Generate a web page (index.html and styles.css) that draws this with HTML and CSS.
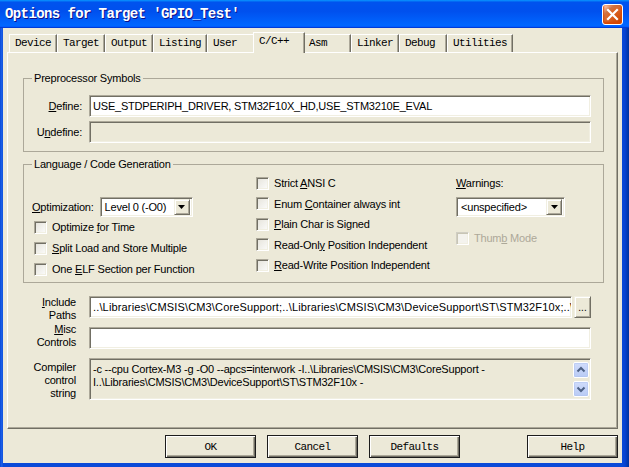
FILE: index.html
```html
<!DOCTYPE html>
<html>
<head>
<meta charset="utf-8">
<title>Options for Target</title>
<link rel="stylesheet" href="styles.css">
</head>
<body>
<div class="window">
  <div class="titlebar">
    <span class="title">Options for Target 'GPIO_Test'</span>
    <span class="close"><svg width="13" height="13" viewBox="0 0 13 13"><path d="M2 2 L11 11 M11 2 L2 11" stroke="#fff" stroke-width="2.2" stroke-linecap="square"/></svg></span>
  </div>
  <div class="client">
    <div class="tabs">
      <span class="tab">Device</span>
      <span class="tab">Target</span>
      <span class="tab">Output</span>
      <span class="tab">Listing</span>
      <span class="tab">User</span>
      <span class="tab active">C/C++</span>
      <span class="tab">Asm</span>
      <span class="tab">Linker</span>
      <span class="tab">Debug</span>
      <span class="tab">Utilities</span>
    </div>
    <div class="panel">
      <fieldset class="group pre">
        <legend>Preprocessor Symbols</legend>
        <div class="pre-grid">
          <label class="rlabel"><u>D</u>efine:</label>
          <div class="field text">USE_STDPERIPH_DRIVER, STM32F10X_HD,USE_STM3210E_EVAL</div>
          <label class="rlabel">U<u>n</u>define:</label>
          <div class="field disabled"></div>
        </div>
      </fieldset>

      <fieldset class="group lang">
        <legend>Language / Code Generation</legend>
        <div class="lang-grid">
          <div class="col col1">
            <div class="opt-row">
              <span><u>O</u>ptimization:</span>
              <div class="combo opt"><span class="combo-text">Level 0 (-O0)</span><span class="drop"><svg width="7" height="4" viewBox="0 0 7 4"><path d="M0 0H7L3.5 4Z" fill="#000"/></svg></span></div>
            </div>
            <div class="check r21"><span class="box"></span><span>Optimize <u>f</u>or Time</span></div>
            <div class="check r21"><span class="box"></span><span><u>S</u>plit Load and Store Multiple</span></div>
            <div class="check r21"><span class="box"></span><span>One <u>E</u>LF Section per Function</span></div>
          </div>
          <div class="col col2">
            <div class="check r20"><span class="box"></span><span>Strict <u>A</u>NSI C</span></div>
            <div class="check r20"><span class="box"></span><span>Enum <u>C</u>ontainer always int</span></div>
            <div class="check r20"><span class="box"></span><span><u>P</u>lain Char is Signed</span></div>
            <div class="check r20"><span class="box"></span><span>Read-Onl<u>y</u> Position Independent</span></div>
            <div class="check r20"><span class="box"></span><span><u>R</u>ead-Write Position Independent</span></div>
          </div>
          <div class="col col3">
            <div class="warn-label"><u>W</u>arnings:</div>
            <div class="combo warn"><span class="combo-text">&lt;unspecified&gt;</span><span class="drop"><svg width="7" height="4" viewBox="0 0 7 4"><path d="M0 0H7L3.5 4Z" fill="#000"/></svg></span></div>
            <div class="check thumb disabled-check"><span class="box"></span><span>Thum<u>b</u> Mode</span></div>
          </div>
        </div>
      </fieldset>

      <div class="misc-grid">
        <label class="mlabel inc"><u>I</u>nclude<br>Paths</label>
        <div class="inc-row">
          <div class="field text clip">..\Libraries\CMSIS\CM3\CoreSupport;..\Libraries\CMSIS\CM3\DeviceSupport\ST\STM32F10x;..\Libraries\STM32F10x_StdPeriph_Driver\inc</div>
          <span class="dots">...</span>
        </div>
        <label class="mlabel misc"><u>M</u>isc<br>Controls</label>
        <div class="field text"></div>
        <label class="mlabel comp">Compiler<br>control<br>string</label>
        <div class="field area">
          <div class="area-text">-c --cpu Cortex-M3 -g -O0 --apcs=interwork -I..\Libraries\CMSIS\CM3\CoreSupport -<br>I..\Libraries\CMSIS\CM3\DeviceSupport\ST\STM32F10x -</div>
          <div class="scrollbar">
            <span class="sbtn"><svg width="16" height="16" viewBox="0 0 16 16"><path d="M4.5 9.5 L8 6 L11.5 9.5" stroke="#4d6185" stroke-width="2" fill="none"/></svg></span>
            <span class="sbtn"><svg width="16" height="16" viewBox="0 0 16 16"><path d="M4.5 6.5 L8 10 L11.5 6.5" stroke="#4d6185" stroke-width="2" fill="none"/></svg></span>
          </div>
        </div>
      </div>
    </div>
    <div class="buttons">
      <button class="btn">OK</button>
      <button class="btn">Cancel</button>
      <button class="btn">Defaults</button>
      <button class="btn help">Help</button>
    </div>
  </div>
</div>
</body>
</html>
```
FILE: styles.css
```css
* { box-sizing: border-box; }
html, body { margin: 0; padding: 0; }
body {
  width: 629px;
  height: 467px;
  overflow: hidden;
  background: #0a4de0;
  font-family: "Liberation Sans", Arial, sans-serif;
  font-size: 11px;
  letter-spacing: -0.2px;
  color: #000;
}
u { text-decoration: underline; text-underline-offset: 1px; }

.window {
  width: 629px;
  height: 467px;
  display: flex;
  flex-direction: column;
  background: linear-gradient(90deg, #0a4ad8 0, #1f63ea 2px, #0a4ad8 3px, #0a4ad8 622px, #0843d2 625px, #00339c 629px);
}

.titlebar {
  height: 28px;
  flex: none;
  display: flex;
  align-items: center;
  justify-content: space-between;
  padding: 0 6px 0 5px;
  background: linear-gradient(180deg, #0997ff, #0053ee 8%, #0050ee 40%, #06f 88%, #06f 93%, #005bff 95%, #003dd7 96%, #003dd7);
}
.title {
  color: #fff;
  font: bold 14px "Liberation Mono", monospace;
  letter-spacing: -0.6px;
  text-shadow: 1px 1px #0f1089;
  white-space: pre;
}
.close {
  width: 21px;
  height: 21px;
  border: 1px solid #fff;
  border-radius: 3px;
  background: radial-gradient(circle at 90% 90%, #cc4600 0, #dc6527 55%, #cd7546 70%, #ffccb2 90%, #fff 100%);
  box-shadow: inset 0 -1px 2px 1px #da4600;
  display: flex;
  align-items: center;
  justify-content: center;
}

.client {
  flex: 1;
  min-width: 0;
  margin: 0 7px 4px 3px;
  background: #ece9d8;
  display: flex;
  flex-direction: column;
  padding-top: 6px;
}

.tabs {
  display: flex;
  height: 18px;
  padding-left: 6px;
  position: relative;
  z-index: 1;
  flex: none;
}
.tab {
  min-width: 48px;
  height: 18px;
  padding: 0 5px;
  font: 11px "Liberation Mono", monospace;
  letter-spacing: -0.6px;
  line-height: 17px;
  border-top: 1px solid #fff;
  border-left: 1px solid #fff;
  border-right: 1px solid #716f64;
  box-shadow: inset -1px 0 #aca899;
  white-space: nowrap;
  background: #ece9d8;
}
.tab.active {
  min-width: 52px;
  height: 21px;
  margin: -2px -2px 0;
  line-height: 16px;
  position: relative;
  z-index: 2;
}

.panel {
  flex: 1;
  min-width: 0;
  margin: 0 4px;
  border: 1px solid;
  border-color: #fff #716f64 #716f64 #fff;
  box-shadow: inset -1px -1px #aca899;
  padding: 19px 13px 0 15px;
  display: flex;
  flex-direction: column;
}

.group {
  margin: 0;
  border: 1px solid #aca899;
  min-width: 0;
}
.group legend {
  padding: 0 2px;
  margin: 0;
  line-height: 13px;
}
.pre { padding: 10px 12px 8px 8px; }
.lang { padding: 2px 12px 2px 8px; margin-top: 6px; }

.pre-grid {
  display: grid;
  grid-template-columns: 50px minmax(0, 1fr);
  column-gap: 7px;
  row-gap: 4px;
  grid-auto-rows: 22px;
  align-items: center;
}
.rlabel { text-align: right; white-space: nowrap; }

.field {
  height: 22px;
  min-width: 0;
  border: 1px solid;
  border-color: #aca899 #fff #fff #aca899;
  box-shadow: inset 1px 1px #716f64, inset -1px -1px #f1efe2;
  background: #fff;
}
.field.text {
  padding: 0 3px;
  line-height: 20px;
  white-space: nowrap;
  overflow: hidden;
}
.field.disabled { background: #ece9d8; }
.clip { flex: 1; letter-spacing: 0.15px; }

.lang-grid {
  display: grid;
  grid-template-columns: 224px 200px minmax(0, 1fr);
}
.col { display: flex; flex-direction: column; }
.opt-row {
  margin-top: 23.5px;
  height: 20px;
  display: flex;
  align-items: center;
  white-space: nowrap;
}
.check {
  display: flex;
  align-items: center;
  white-space: nowrap;
  gap: 5px;
}
.col1 .check { padding-left: 2px; }
.r21 { height: 21px; }
.r20 { height: 20.5px; }
.box {
  width: 13px;
  height: 13px;
  flex: none;
  border: 1px solid;
  border-color: #aca899 #fff #fff #aca899;
  box-shadow: inset 1px 1px #716f64, inset -1px -1px #f1efe2;
  background: linear-gradient(135deg, #e5e3da, #fcfcfb);
}
.disabled-check { color: #aca899; }
.disabled-check .box {
  border-color: #d0cec3 #fff #fff #d0cec3;
  box-shadow: inset 1px 1px #c8c5b5, inset -1px -1px #f1efe2;
  background: #f4f3ee;
}

.combo {
  height: 20px;
  display: flex;
  align-items: center;
  border: 1px solid;
  border-color: #aca899 #fff #fff #aca899;
  box-shadow: inset 1px 1px #716f64, inset -1px -1px #f1efe2;
  background: #fff;
  padding: 2px;
}
.combo.opt { width: 93px; margin-left: 6px; }
.combo.warn { width: 109px; margin-top: 4px; }
.combo-text { flex: 1; padding-left: 2px; white-space: nowrap; overflow: hidden; }
.drop {
  width: 16px;
  height: 16px;
  flex: none;
  display: flex;
  align-items: center;
  justify-content: center;
  background: #ece9d8;
  border: 1px solid;
  border-color: #f1efe2 #716f64 #716f64 #f1efe2;
  box-shadow: inset 1px 1px #fff, inset -1px -1px #aca899;
}
.warn-label { height: 20px; line-height: 20px; }
.thumb { height: 20px; margin-top: 11px; }

.misc-grid {
  display: grid;
  grid-template-columns: 53px minmax(0, 1fr);
  grid-template-rows: 22px 22px 42px;
  column-gap: 13px;
  row-gap: 9px;
  margin: 13px 13px 0 0;
}
.mlabel {
  text-align: right;
  line-height: 13px;
  align-self: start;
  white-space: nowrap;
}
.misc { margin-top: -3.5px; }
.comp { margin-top: 3.5px; }
.inc-row { display: flex; gap: 2px; min-width: 0; }
.dots {
  width: 17px;
  height: 22px;
  flex: none;
  border: 1px solid;
  border-color: #f1efe2 #716f64 #716f64 #f1efe2;
  box-shadow: inset 1px 1px #fff, inset -1px -1px #aca899;
  background: #ece9d8;
  text-align: center;
  line-height: 22px;
  font-size: 10px;
  letter-spacing: 0;
}
.field.area {
  height: 42px;
  background: #ece9d8;
  display: flex;
  padding: 2px 0 2px 3px;
}
.area-text {
  flex: 1;
  min-width: 0;
  line-height: 13px;
  padding-top: 2px;
  white-space: nowrap;
  overflow: hidden;
}
.scrollbar {
  width: 17px;
  flex: none;
  display: flex;
  flex-direction: column;
  justify-content: space-between;
  align-items: flex-end;
  padding: 1px 1px 0 0;
}
.sbtn {
  width: 16px;
  height: 16px;
  display: block;
  border: 1px solid #fff;
  border-radius: 2px;
  background: linear-gradient(180deg, #d0dcfb, #b9cbf5);
  box-shadow: inset 0 0 0 0.5px #aec2f0;
}
.sbtn svg { display: block; margin: -1px; }

.buttons {
  flex: none;
  display: flex;
  gap: 11px;
  margin: 6px 4px 5px;
  padding-left: 158px;
}
.btn {
  width: 91px;
  height: 23px;
  margin: 0;
  padding: 0;
  font: 11px "Liberation Mono", monospace;
  letter-spacing: -0.6px;
  color: #000;
  background: #ece9d8;
  border: 1px solid #1c1c1c;
  border-radius: 0;
  box-shadow: inset 1px 1px #fff, inset -1px -1px #716f64, inset -2px -2px #aca899;
}
.btn.help { margin-left: auto; }
```
